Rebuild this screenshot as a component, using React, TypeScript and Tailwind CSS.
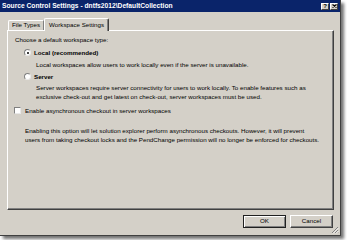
import React from "react"

function TitleButton({ children }: { children: React.ReactNode }) {
  return (
    <div className="w-[8px] h-[7px] bg-[#d4d0c8] border-t border-l border-white border-r border-b border-r-[#404040] border-b-[#404040] flex items-center justify-center text-black text-[6px] font-bold leading-none">
      {children}
    </div>
  )
}

function Radio({ checked }: { checked?: boolean }) {
  return (
    <div className="w-[7px] h-[7px] rounded-full bg-white border border-t-[#808080] border-l-[#808080] border-r-[#e8e8e8] border-b-[#e8e8e8] flex items-center justify-center shrink-0">
      {checked && <div className="w-[2px] h-[2px] rounded-full bg-black" />}
    </div>
  )
}

function Button({ label, isDefault }: { label: string; isDefault?: boolean }) {
  return (
    <div
      className={
        isDefault
          ? "w-[43px] h-[13px] bg-[#d4d0c8] border border-[#202020] flex items-center justify-center shadow-[inset_1px_1px_0_#fff,inset_-1px_-1px_0_#808080]"
          : "w-[43px] h-[13px] bg-[#d4d0c8] border border-t-white border-l-white border-r-[#404040] border-b-[#404040] flex items-center justify-center shadow-[inset_-1px_-1px_0_#808080]"
      }
    >
      <span className="text-[6.2px] leading-none text-black">{label}</span>
    </div>
  )
}

export default function App() {
  return (
    <div className="w-[347px] h-[240px] bg-white font-['Liberation_Sans',Arial,sans-serif] text-black">
      <div className="relative w-[341px] h-[236px] bg-[#d4d0c8] flex flex-col border-r border-b border-[#404040] shadow-[3px_3px_3px_rgba(0,0,0,0.55)]">
        <div className="h-[12px] bg-[#0a246a] flex items-center justify-between pl-[2px] pr-[2px]">
          <span className="text-white font-bold text-[6.7px] leading-none whitespace-nowrap">
            Source Control Settings - dntfs2012\DefaultCollection
          </span>
          <div className="flex gap-[1px]">
            <TitleButton>?</TitleButton>
            <TitleButton>
              <svg width="5" height="4" viewBox="0 0 5 4">
                <path d="M0.5 0.5 L4.5 3.5 M4.5 0.5 L0.5 3.5" stroke="#000" strokeWidth="1.1" />
              </svg>
            </TitleButton>
          </div>
        </div>

        <div className="flex flex-col pl-[7px] pr-[6px] pt-[6px]">
          <div className="flex items-end h-[12px] pl-[1px]">
            <div className="h-[10px] px-[3px] bg-[#d4d0c8] border-t border-l border-white border-r border-r-[#808080] rounded-tl-[2px] flex items-center">
              <span className="text-[6.2px] leading-none whitespace-nowrap">File Types</span>
            </div>
            <div className="relative z-10 h-[13px] -mb-[1px] px-[4px] bg-[#d4d0c8] border-t border-l border-white border-r border-r-[#404040] rounded-t-[2px] flex items-start pt-[3px] shadow-[inset_-1px_0_0_#808080]">
              <span className="text-[6.2px] leading-none whitespace-nowrap">Workspace Settings</span>
            </div>
          </div>

          <div className="h-[180px] border-t border-l border-white border-r border-b border-r-[#404040] border-b-[#404040] shadow-[inset_-1px_-1px_0_#808080] pl-[7px] pt-[4px] flex flex-col text-[6.2px] leading-[9px]">
            <div>Choose a default workspace type:</div>
            <div className="mt-[4px] ml-[9px] flex items-center gap-[3px]">
              <Radio checked />
              <span className="font-bold">Local (recommended)</span>
            </div>
            <div className="mt-[3px] ml-[21px]">
              Local workspaces allow users to work locally even if the server is unavailable.
            </div>
            <div className="mt-[3px] ml-[9px] flex items-center gap-[3px]">
              <Radio />
              <span className="font-bold">Server</span>
            </div>
            <div className="mt-[2px] ml-[21px]">
              <div>Server workspaces require server connectivity for users to work locally. To enable features such as</div>
              <div>exclusive check-out and get latest on check-out, server workspaces must be used.</div>
            </div>
            <div className="mt-[5px] -ml-[1px] flex items-center gap-[4px]">
              <div className="w-[7px] h-[7px] bg-white border border-t-[#808080] border-l-[#808080] border-r-[#e8e8e8] border-b-[#e8e8e8] shrink-0" />
              <span>Enable asynchronous checkout in server workspaces</span>
            </div>
            <div className="mt-[11px] ml-[10px]">
              <div>Enabling this option will let solution explorer perform asynchronous checkouts. However, it will prevent</div>
              <div>users from taking checkout locks and the PendChange permission will no longer be enforced for checkouts.</div>
            </div>
          </div>

          <div className="mt-[5px] flex justify-end gap-[4px] pr-[1px]">
            <Button label="OK" isDefault />
            <Button label="Cancel" />
          </div>
        </div>

        <svg className="absolute right-[1px] bottom-[1px]" width="8" height="8" viewBox="0 0 8 8">
          <path d="M7 1 L1 7 M7 4 L4 7 M7 6.5 L6.5 7" stroke="#808080" strokeWidth="1" />
          <path d="M7.5 2 L2 7.5 M7.5 5 L5 7.5" stroke="#ffffff" strokeWidth="0.8" />
        </svg>
      </div>
    </div>
  )
}
